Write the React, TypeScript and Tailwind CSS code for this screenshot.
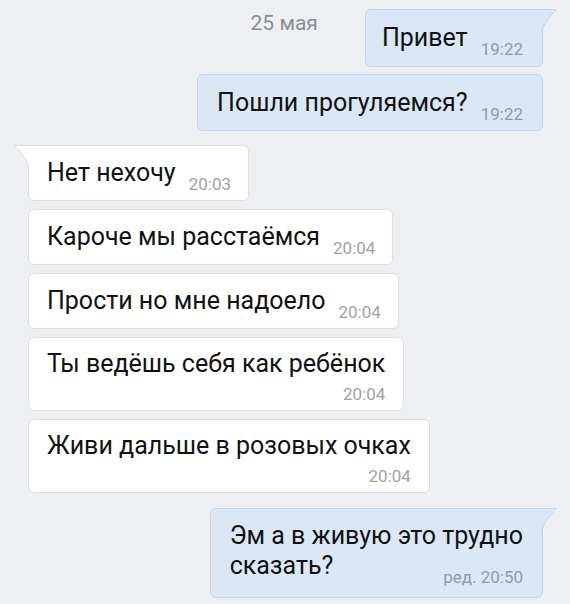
import React from "react";

function TailRight() {
  return (
    <svg
      viewBox="0 0 17 24"
      className="absolute -right-[16px] -top-px h-[24px] w-[17px]"
      aria-hidden
    >
      <path d="M0 0.5 H15.5 C11 5 3 13 0.5 23.5 V0.5 Z" fill="#dce7f6" />
      <path d="M0 0.5 H15.5 C11 5 3 13 0.5 23.5" fill="none" stroke="#c8d3e2" strokeWidth="1" />
    </svg>
  );
}

function TailLeft() {
  return (
    <svg
      viewBox="0 0 17 24"
      className="absolute -left-[16px] -top-px h-[24px] w-[17px]"
      aria-hidden
    >
      <path d="M17 0.5 H1.5 C6 5 14 13 16.5 23.5 V0.5 Z" fill="#ffffff" />
      <path d="M17 0.5 H1.5 C6 5 14 13 16.5 23.5" fill="none" stroke="#dcdfe4" strokeWidth="1" />
    </svg>
  );
}

const outBox = "relative rounded-[6px] border border-[#c8d3e2] bg-[#dce7f6]";
const inBox = "relative rounded-[6px] border border-[#dcdfe4] bg-white";
const msg = "text-[25px] leading-[30px] text-[#111]";
const timeOut = "text-[17px] leading-[16px] text-[#8e9aab]";
const timeIn = "text-[17px] leading-[16px] text-[#a2a2a2]";

function Incoming({ text, time, first }: { text: string; time: string; first?: boolean }) {
  return (
    <div className={`${inBox} ${first ? "rounded-tl-none" : ""} flex items-end pb-[8px] pl-[18px] pr-[17px] pt-[12px]`}>
      {first && <TailLeft />}
      <span className={`${msg} mb-[4px]`}>{text}</span>
      <span className={`${timeIn} ml-[13px]`}>{time}</span>
    </div>
  );
}

function IncomingStacked({ text, time }: { text: string; time: string }) {
  return (
    <div className={`${inBox} flex flex-col pb-[8px] pl-[18px] pr-[18px] pt-[11px]`}>
      <span className={msg}>{text}</span>
      <span className={`${timeIn} mt-[7px] self-end`}>{time}</span>
    </div>
  );
}

export default function App() {
  return (
    <div className="flex h-[604px] w-[570px] flex-col overflow-hidden bg-[#edeff2] pt-[9px] font-['Roboto',sans-serif]">
      <div className="flex items-start justify-end pr-[27px]">
        <span className="mr-[47px] mt-[1px] text-[21px] leading-[26px] text-[#8a8d91]">25 мая</span>
        <div className={`${outBox} flex items-end rounded-tr-none pb-[9px] pl-[16px] pr-[19px] pt-[13px]`}>
          <TailRight />
          <span className={`${msg} mb-[4px]`}>Привет</span>
          <span className={`${timeOut} ml-[13px]`}>19:22</span>
        </div>
      </div>

      <div className="mt-[7px] flex justify-end pr-[27px]">
        <div className={`${outBox} flex items-end pb-[8px] pl-[19px] pr-[19px] pt-[13px]`}>
          <span className={`${msg} mb-[4px]`}>Пошли прогуляемся?</span>
          <span className={`${timeOut} ml-[13px]`}>19:22</span>
        </div>
      </div>

      <div className="mt-[14px] flex flex-col items-start gap-[8px] pl-[28px]">
        <Incoming first text="Нет нехочу" time="20:03" />
        <Incoming text="Кароче мы расстаёмся" time="20:04" />
        <Incoming text="Прости но мне надоело" time="20:04" />
        <IncomingStacked text="Ты ведёшь себя как ребёнок" time="20:04" />
        <IncomingStacked text="Живи дальше в розовых очках" time="20:04" />
      </div>

      <div className="mt-[15px] flex justify-end pr-[27px]">
        <div className={`${outBox} flex flex-col rounded-tr-none pb-[12px] pl-[19px] pr-[19px] pt-[12px]`}>
          <TailRight />
          <span className={msg}>Эм а в живую это трудно</span>
          <div className="flex items-end justify-between">
            <span className={`${msg} mb-[4px]`}>сказать?</span>
            <span className={timeOut}>ред. 20:50</span>
          </div>
        </div>
      </div>
    </div>
  );
}
